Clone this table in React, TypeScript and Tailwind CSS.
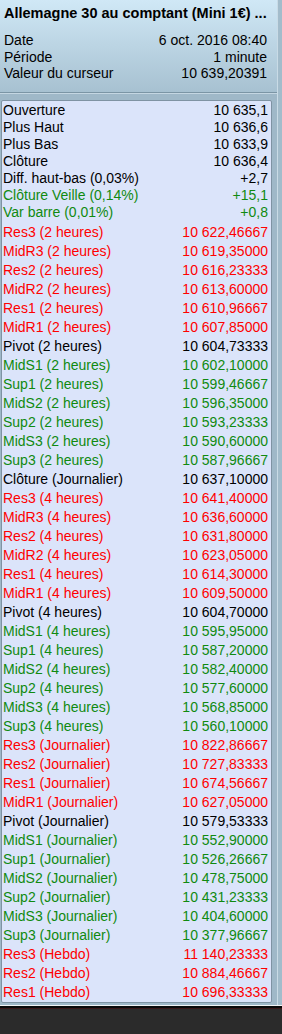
import React from 'react';

type Row = { label: string; value: string; color: 'k' | 'g' | 'r' };

const summary: Row[] = [
    { label: 'Ouverture', value: '10 635,1', color: 'k' },
    { label: 'Plus Haut', value: '10 636,6', color: 'k' },
    { label: 'Plus Bas', value: '10 633,9', color: 'k' },
    { label: 'Clôture', value: '10 636,4', color: 'k' },
    { label: 'Diff. haut-bas (0,03%)', value: '+2,7', color: 'k' },
    { label: 'Clôture Veille (0,14%)', value: '+15,1', color: 'g' },
    { label: 'Var barre (0,01%)', value: '+0,8', color: 'g' },
];

const pivots: Row[] = [
    { label: 'Res3 (2 heures)', value: '10 622,46667', color: 'r' },
    { label: 'MidR3 (2 heures)', value: '10 619,35000', color: 'r' },
    { label: 'Res2 (2 heures)', value: '10 616,23333', color: 'r' },
    { label: 'MidR2 (2 heures)', value: '10 613,60000', color: 'r' },
    { label: 'Res1 (2 heures)', value: '10 610,96667', color: 'r' },
    { label: 'MidR1 (2 heures)', value: '10 607,85000', color: 'r' },
    { label: 'Pivot (2 heures)', value: '10 604,73333', color: 'k' },
    { label: 'MidS1 (2 heures)', value: '10 602,10000', color: 'g' },
    { label: 'Sup1 (2 heures)', value: '10 599,46667', color: 'g' },
    { label: 'MidS2 (2 heures)', value: '10 596,35000', color: 'g' },
    { label: 'Sup2 (2 heures)', value: '10 593,23333', color: 'g' },
    { label: 'MidS3 (2 heures)', value: '10 590,60000', color: 'g' },
    { label: 'Sup3 (2 heures)', value: '10 587,96667', color: 'g' },
    { label: 'Clôture (Journalier)', value: '10 637,10000', color: 'k' },
    { label: 'Res3 (4 heures)', value: '10 641,40000', color: 'r' },
    { label: 'MidR3 (4 heures)', value: '10 636,60000', color: 'r' },
    { label: 'Res2 (4 heures)', value: '10 631,80000', color: 'r' },
    { label: 'MidR2 (4 heures)', value: '10 623,05000', color: 'r' },
    { label: 'Res1 (4 heures)', value: '10 614,30000', color: 'r' },
    { label: 'MidR1 (4 heures)', value: '10 609,50000', color: 'r' },
    { label: 'Pivot (4 heures)', value: '10 604,70000', color: 'k' },
    { label: 'MidS1 (4 heures)', value: '10 595,95000', color: 'g' },
    { label: 'Sup1 (4 heures)', value: '10 587,20000', color: 'g' },
    { label: 'MidS2 (4 heures)', value: '10 582,40000', color: 'g' },
    { label: 'Sup2 (4 heures)', value: '10 577,60000', color: 'g' },
    { label: 'MidS3 (4 heures)', value: '10 568,85000', color: 'g' },
    { label: 'Sup3 (4 heures)', value: '10 560,10000', color: 'g' },
    { label: 'Res3 (Journalier)', value: '10 822,86667', color: 'r' },
    { label: 'Res2 (Journalier)', value: '10 727,83333', color: 'r' },
    { label: 'Res1 (Journalier)', value: '10 674,56667', color: 'r' },
    { label: 'MidR1 (Journalier)', value: '10 627,05000', color: 'r' },
    { label: 'Pivot (Journalier)', value: '10 579,53333', color: 'k' },
    { label: 'MidS1 (Journalier)', value: '10 552,90000', color: 'g' },
    { label: 'Sup1 (Journalier)', value: '10 526,26667', color: 'g' },
    { label: 'MidS2 (Journalier)', value: '10 478,75000', color: 'g' },
    { label: 'Sup2 (Journalier)', value: '10 431,23333', color: 'g' },
    { label: 'MidS3 (Journalier)', value: '10 404,60000', color: 'g' },
    { label: 'Sup3 (Journalier)', value: '10 377,96667', color: 'g' },
    { label: 'Res3 (Hebdo)', value: '11 140,23333', color: 'r' },
    { label: 'Res2 (Hebdo)', value: '10 884,46667', color: 'r' },
    { label: 'Res1 (Hebdo)', value: '10 696,33333', color: 'r' },
];

const colorClass = (c: Row['color']) => {
    switch (c) {
        case 'g': return 'text-[#108a10]';
        case 'r': return 'text-[#ff0000]';
        default: return 'text-black';
    }
};

const App = () => {
    return (
        <div className="w-[282px] h-[1034px] flex flex-col bg-[#2b2b2b] overflow-hidden text-[14px] font-['Liberation_Sans',Arial,sans-serif]">
            <div className="flex h-[1005px] shrink-0">
                <div className="w-[277px] flex flex-col bg-[#9fb8c8]">
                    <div className="h-[92px] shrink-0 bg-gradient-to-b from-[#d0e8f6] to-[#a7c1d1] pl-[4px] pr-[10px] pt-[5px]">
                        <div className="font-bold text-[14.5px] leading-[17px] whitespace-nowrap">Allemagne 30 au comptant (Mini 1€) ...</div>
                        <div className="mt-[10px] leading-[16.7px]">
                            <div className="flex justify-between"><span>Date</span><span>6 oct. 2016 08:40</span></div>
                            <div className="flex justify-between"><span>Période</span><span>1 minute</span></div>
                            <div className="flex justify-between"><span>Valeur du curseur</span><span>10 639,20391</span></div>
                        </div>
                    </div>
                    <div className="h-px shrink-0 bg-[#7b95a5]" />
                    <div className="h-px shrink-0 bg-[#c4d6e2]" />
                    <div className="flex-1 pt-[6px] pl-[1px]">
                        <div className="w-[271px] bg-[#dbe4fa] border border-[#7f93a3] rounded-[2px] pt-[1px] pl-[1px] pr-[3px]">
                            {summary.map(r => (
                                <div key={r.label} className={`flex justify-between h-[17px] leading-[17px] ${colorClass(r.color)}`}>
                                    <span>{r.label}</span><span>{r.value}</span>
                                </div>
                            ))}
                            <div className="mt-[2px]">
                                {pivots.map(r => (
                                    <div key={r.label} className={`flex justify-between h-[19px] leading-[19px] ${colorClass(r.color)}`}>
                                        <span>{r.label}</span><span>{r.value}</span>
                                    </div>
                                ))}
                            </div>
                        </div>
                    </div>
                </div>
                <div className="w-[5px] bg-[#a3bccb] border-l border-[#c9dbe6]" />
            </div>
            <div className="h-px shrink-0 bg-[#f2f4f6]" />
            <div className="h-[2px] shrink-0 bg-[#0a0a0a]" />
            <div className="h-px shrink-0 bg-[#3a1818]" />
            <div className="flex-1 bg-[#2b2b2b]" />
        </div>
    );
};

export default App;
